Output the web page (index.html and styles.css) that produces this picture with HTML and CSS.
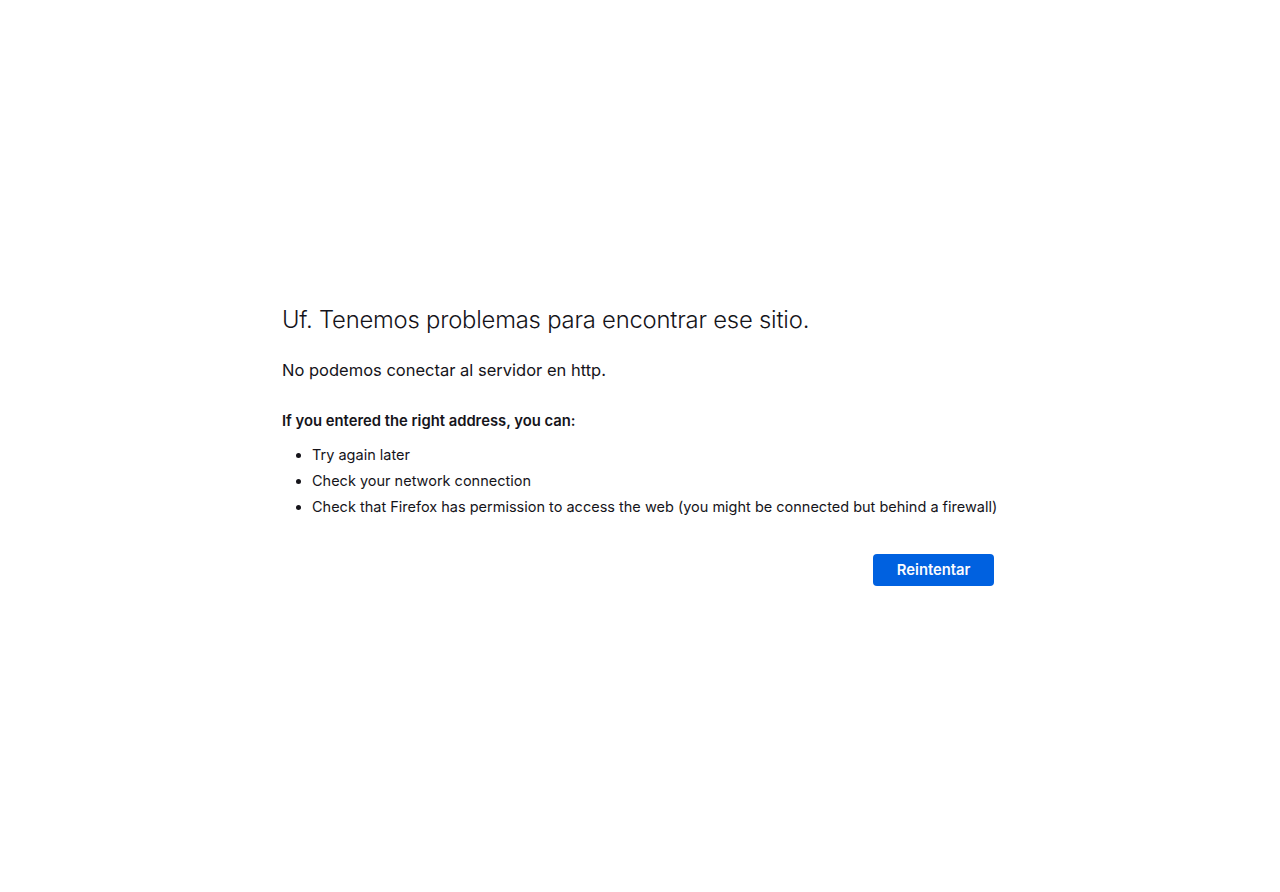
FILE: index.html
```html
<!DOCTYPE html>
<html lang="es">
<head>
<meta charset="utf-8">
<title>Problema al cargar la página</title>
<link rel="stylesheet" href="styles.css">
</head>
<body>
<main class="page">
  <div class="container">
    <h1 class="title">Uf. Tenemos problemas para encontrar ese sitio.</h1>
    <p class="desc">No podemos conectar al servidor en http.</p>
    <p class="hint">If you entered the right address, you can:</p>
    <ul class="list">
      <li>Try again later</li>
      <li>Check your network connection</li>
      <li>Check that Firefox has permission to access the web (you might be connected but behind a firewall)</li>
    </ul>
    <div class="actions">
      <button class="retry">Reintentar</button>
    </div>
  </div>
</main>
</body>
</html>
```

FILE: styles.css
```css
html, body {
  margin: 0;
  padding: 0;
  height: 100%;
  background: #ffffff;
}
body {
  font-family: Inter, "Noto Sans", sans-serif;
  color: #15141a;
}
.page {
  min-height: 100%;
  display: flex;
  align-items: center;
  justify-content: center;
}
.container {
  width: 712px;
  margin-left: -4px;
}
.title {
  font-size: 23.8px;
  font-weight: 300;
  margin: 0 0 24px;
  line-height: 1.2;
  letter-spacing: -0.2px;
}
.desc {
  font-size: 16.5px;
  margin: 0 0 29px;
  line-height: 1.4;
}
.hint {
  font-size: 14.8px;
  font-weight: 600;
  margin: 0 0 13px;
  line-height: 1.4;
}
.list {
  margin: 0;
  padding-left: 30px;
  font-size: 14.5px;
  line-height: 1.4;
}
.list li {
  margin-bottom: 6px;
  white-space: nowrap;
}
.actions {
  display: flex;
  justify-content: flex-end;
  margin-top: 36px;
}
.retry {
  font-family: inherit;
  font-size: 14.8px;
  font-weight: 600;
  color: #fbfbfe;
  background: #0061e0;
  border: none;
  border-radius: 4px;
  height: 32px;
  padding: 0 23.5px;
}
```
